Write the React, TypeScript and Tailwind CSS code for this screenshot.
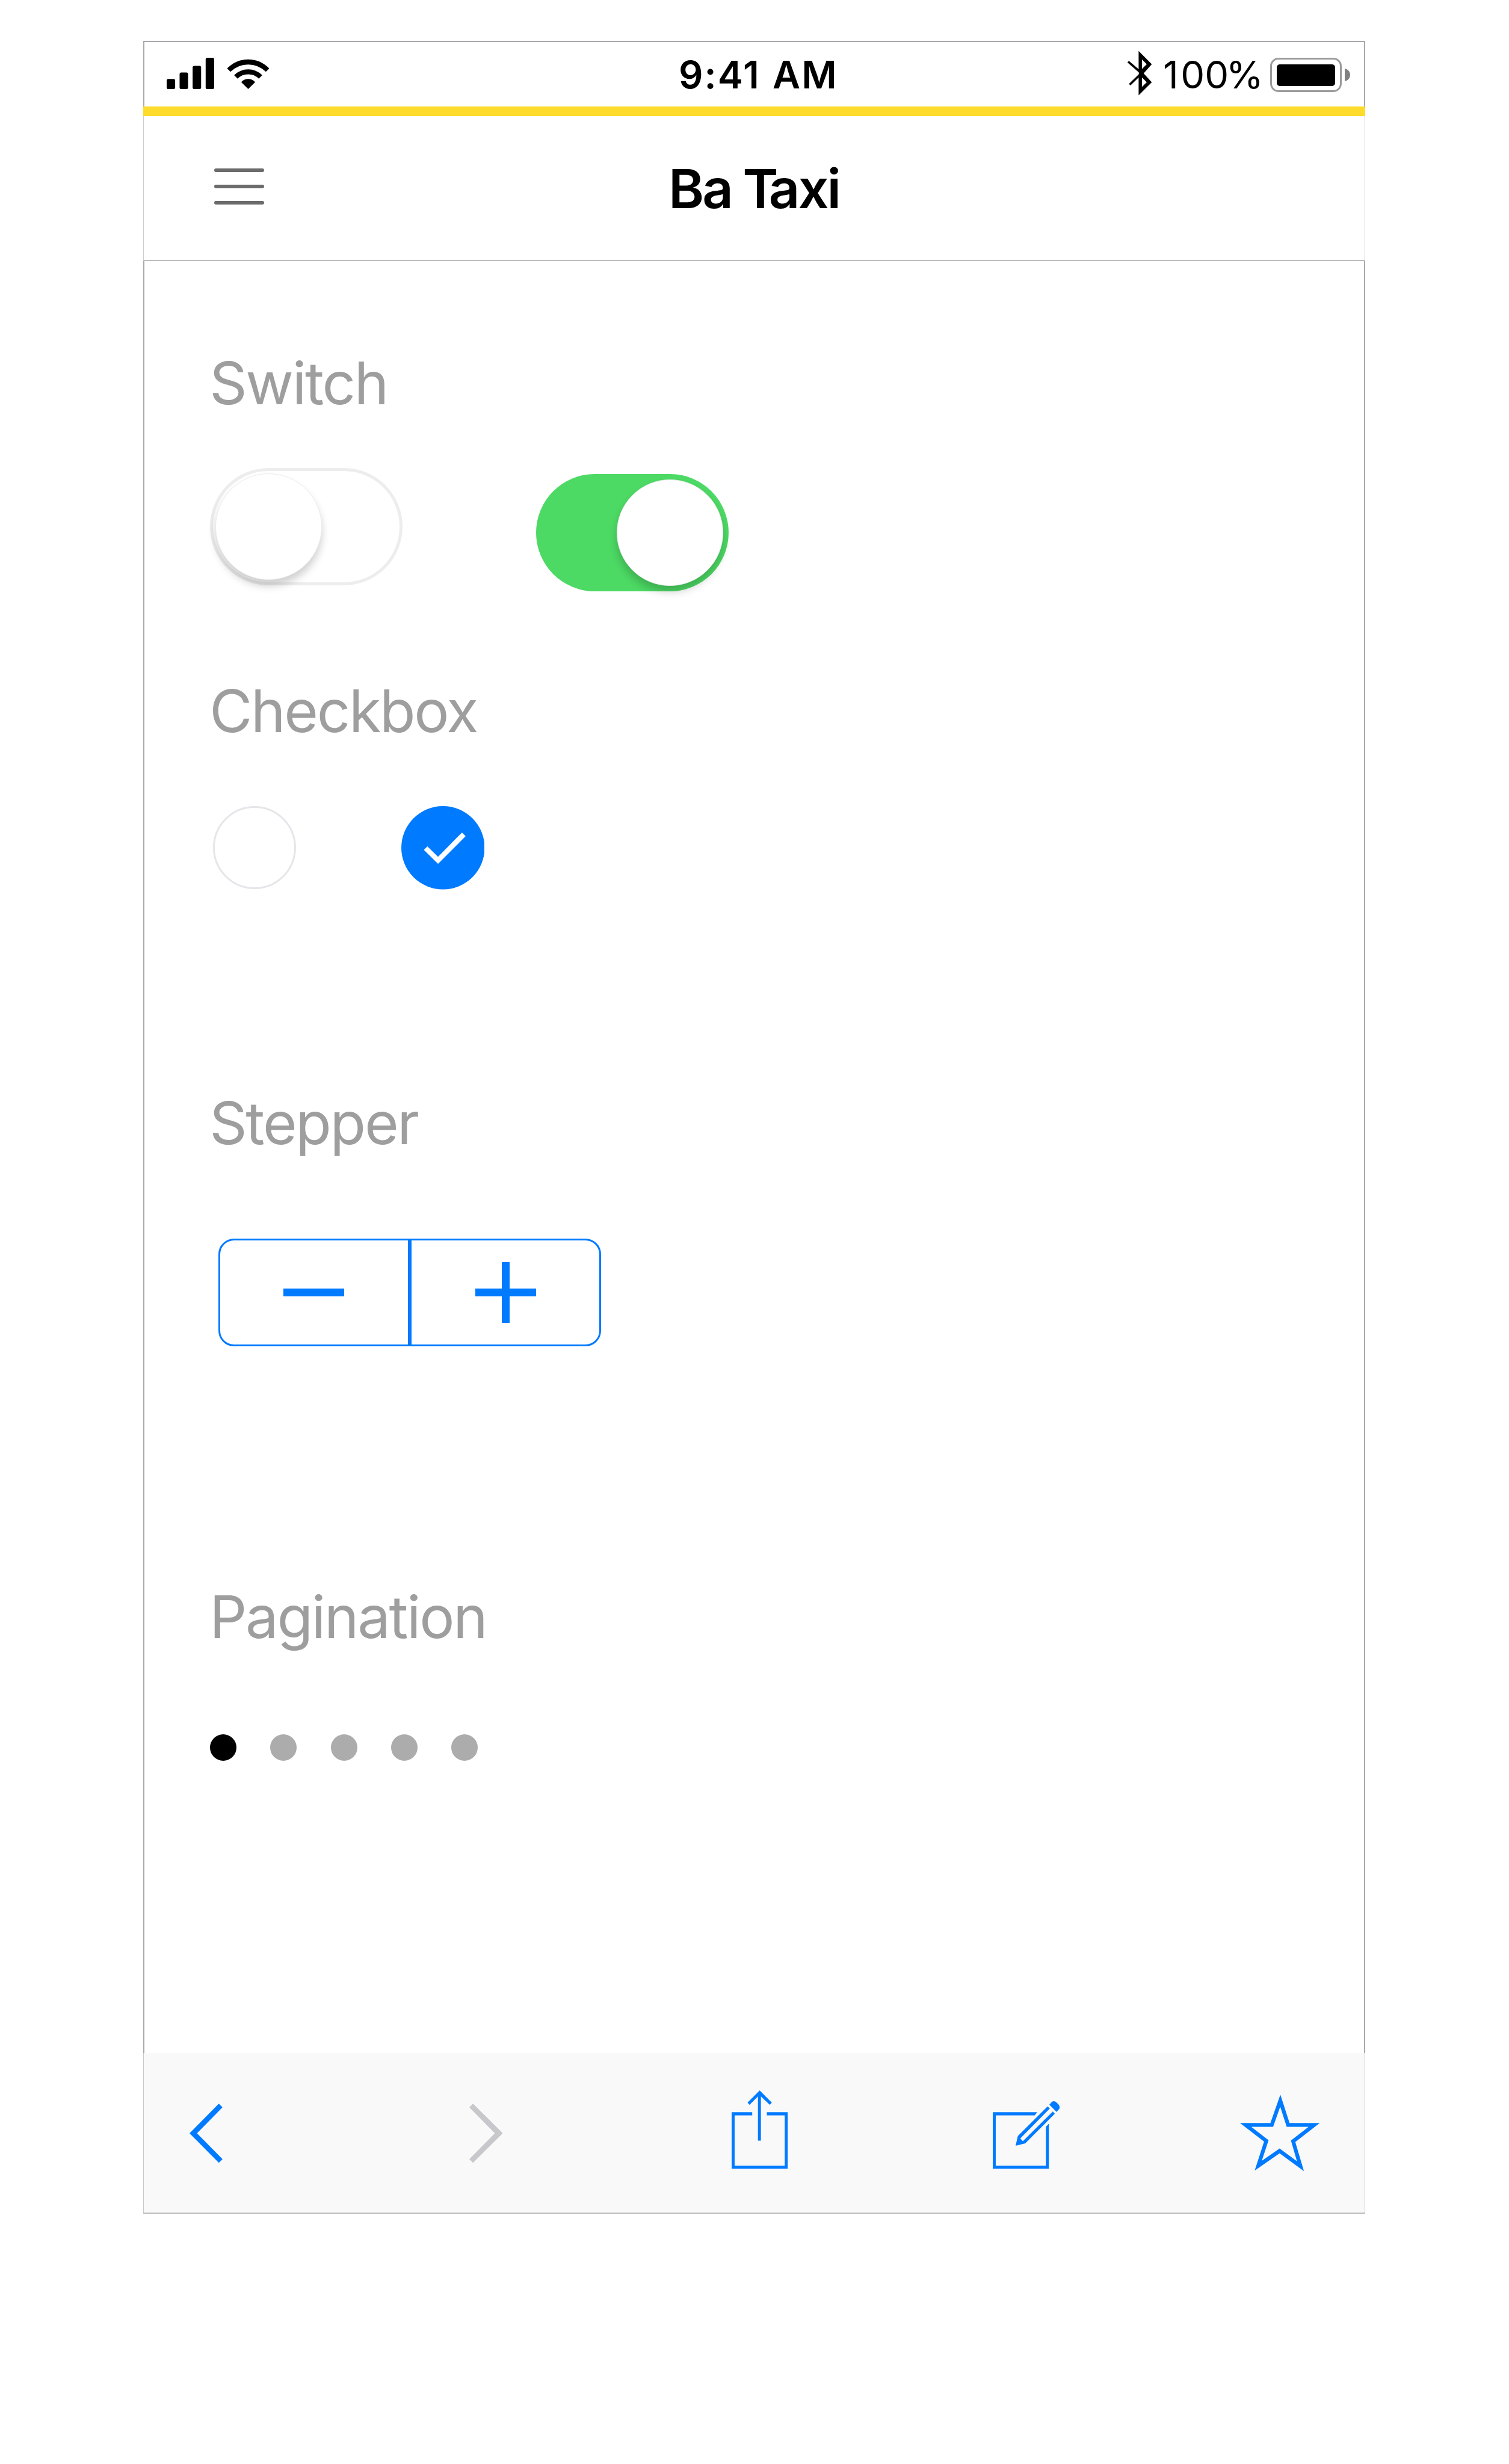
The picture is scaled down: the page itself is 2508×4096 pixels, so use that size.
const BLUE = '#007aff';

function SignalIcons() {
  return (
    <svg className="mt-[26px] ml-[36.7px] h-[52.4px] w-[170.6px] shrink-0" viewBox="152 170 508 206" preserveAspectRatio="none">
      <rect x="152" y="309" width="42" height="66" rx="8" ry="10" />
      <rect x="216" y="266" width="42" height="109" rx="8" ry="10" />
      <rect x="280.500" y="223" width="42" height="152" rx="8" ry="10" />
      <rect x="345" y="170" width="42" height="205" rx="8" ry="10" />
      <path d="M451 240Q496 181 555.500 181Q615 181 660 240L643 261Q605 214 555.500 214Q506 214 468 261Z" />
      <path d="M486 284Q516 246 555.500 246Q595 246 625 284L608 307Q587 278 555.500 278Q524 278 503 307Z" />
      <path d="M521 329Q536 309 555.500 309Q575 309 590 329L555.500 374Z" />
    </svg>
  );
}

function BluetoothIcon() {
  return (
    <svg className="mt-[13.3px] h-[76.3px] w-[44.6px] shrink-0" viewBox="100 120 155 300" preserveAspectRatio="none">
      <path
        fillRule="evenodd"
        d="M171 127L247 213L200 273L247 331L171 417V300L124 352L115 342L171 280L173 272L171 265L106 202L115 192L171 246ZM190 182V245L218 213ZM190 300V362L218 331Z"
      />
    </svg>
  );
}

function Battery() {
  return (
    <div className="mt-[26px] flex items-center">
      <div className="h-[57px] w-[119px] rounded-[14px] border-[3px] border-[#9b9b9b] px-[8px] pt-[7.500px]">
        <div className="h-[36px] w-[97px] rounded-[5px] bg-black" />
      </div>
      <svg className="ml-[5px] h-[21px] w-[9px]" viewBox="0 0 9 21">
        <path d="M0 0C5 1 9 5 9 10.500S5 20 0 21Z" fill="#808080" />
      </svg>
    </div>
  );
}

function StatusBar() {
  return (
    <div className="flex h-[109px] items-start border-x-2 border-t-2 border-[#a8a9ad]">
      <SignalIcons />
      <div className="mt-[23px] ml-[680.700px] w-[280px] text-[63.300px] leading-none font-semibold tracking-[2.100px] whitespace-nowrap [word-spacing:2px]">
        9:41 AM
      </div>
      <div className="ml-[463.700px]">
        <BluetoothIcon />
      </div>
      <div className="mt-[23px] ml-[16.700px] w-[178.500px] text-[63.300px] leading-none whitespace-nowrap">
        <span className="tracking-[3.600px]">1</span>0<span className="tracking-[-4.500px]">0</span>%
      </div>
      <Battery />
    </div>
  );
}

function NavBar() {
  return (
    <div className="flex h-[241px] items-start border-x border-b-2 border-x-[#cdcdcd] border-b-[#bdbdbd]">
      <div className="mt-[87px] ml-[117px] flex w-[83px] flex-col gap-[21px]">
        <div className="h-[6px] rounded-full bg-[#6b6b6b]" />
        <div className="h-[6px] rounded-full bg-[#6b6b6b]" />
        <div className="h-[6px] rounded-full bg-[#6b6b6b]" />
      </div>
      <h1 className="mt-[75.500px] ml-[672px] text-[89.900px] leading-none font-semibold tracking-[-2.900px] whitespace-nowrap [word-spacing:-1.500px]">
        Ba <span className="tracking-[-16px]">T</span>axi
      </h1>
    </div>
  );
}

function Heading({ children }: { children: string }) {
  return (
    <h2 className="-ml-[0.8px] h-[97px] text-[97.300px] leading-[97px] tracking-[-2.300px] whitespace-nowrap text-[#9e9e9e]">
      {children}
    </h2>
  );
}

function Knob() {
  return (
    <div className="size-[177px] rounded-full border border-[#ececec] bg-white shadow-[0_10px_14px_rgba(0,0,0,0.19)]" />
  );
}

function Switches() {
  return (
    <div className="mt-[93px] flex h-[205px] items-start">
      <div className="flex h-[195px] w-[320px] items-center rounded-full border-[5px] border-[#ededed] pl-[4px]">
        <Knob />
      </div>
      <div className="mt-[10px] ml-[222px] flex h-[195px] w-[320px] items-center justify-end rounded-full bg-[#4cd964] pr-[9px]">
        <Knob />
      </div>
    </div>
  );
}

function Checkboxes() {
  return (
    <div className="mt-[110px] ml-[4.500px] flex gap-[175px]">
      <div className="size-[138px] rounded-full border-[3px] border-[#e5e5ea]" />
      <svg className="size-[138.500px]" viewBox="886.7 1780.900 184 184">
        <circle cx="978.7" cy="1872.900" r="92" fill={BLUE} />
        <path d="M936.5 1877.7L944.3 1870L967.8 1892.700L1020.7 1839.300L1028.700 1847.300L967.8 1908.300Z" fill="#fff" />
      </svg>
    </div>
  );
}

function Stepper() {
  return (
    <div className="mt-[144.500px] ml-[14px] flex h-[179px] w-[636px] rounded-[26px] border-[3px] border-[#007aff]">
      <div className="flex flex-1 items-center justify-center">
        <div className="h-[13px] w-[101px] bg-[#007aff]" />
      </div>
      <div className="w-[6.500px] bg-[#007aff]" />
      <div className="flex flex-1 items-center justify-center">
        <svg className="size-[101px]" viewBox="0 0 101 101">
          <path d="M44 0H57V44H101V57H57V101H44V57H0V44H44Z" fill={BLUE} />
        </svg>
      </div>
    </div>
  );
}

function Dots() {
  return (
    <div className="mt-[147px] flex gap-[56.300px]">
      <div className="size-[44px] rounded-full bg-black" />
      <div className="size-[44px] rounded-full bg-[#acacac]" />
      <div className="size-[44px] rounded-full bg-[#acacac]" />
      <div className="size-[44px] rounded-full bg-[#acacac]" />
      <div className="size-[44px] rounded-full bg-[#acacac]" />
    </div>
  );
}

function ToolBar() {
  return (
    <div className="flex h-[267px] items-start border-x border-b-2 border-x-[#c9c9c9] border-b-[#bdbdbd] bg-[#f9f9f9]">
      <svg className="mt-[83.500px] ml-[76.200px] h-[98.300px] w-[54.900px]" viewBox="217 447 133 392" preserveAspectRatio="none">
        <path d="M335 447L350 471L247 643L350 815L335 839L217 643Z" fill={BLUE} />
      </svg>
      <svg className="mt-[83.500px] ml-[409.600px] h-[98.300px] w-[55.700px]" viewBox="1343 447 135 392" preserveAspectRatio="none">
        <path d="M1358 447L1343 471L1446 643L1343 815L1358 839L1478 643Z" fill="#c7c7cc" />
      </svg>
      <svg className="mt-[62.300px] ml-[381px] h-[130.100px] w-[93.200px]" viewBox="104 362 226 519" preserveAspectRatio="none">
        <path d="M104 507H187V528H116V861H318V528H246V507H330V881H104Z" fill={BLUE} />
        <path d="M217 362L266 443L258 458L222 402V695H210V402L176 458L168 443Z" fill={BLUE} />
      </svg>
      <svg className="mt-[80.300px] ml-[340px] h-[112.100px] w-[111.400px]" viewBox="1154 434 270 447" preserveAspectRatio="none">
        <path d="M1154 507H1333L1323 528H1166V861H1368V603L1380 583V881H1154Z" fill={BLUE} />
        <path d="M1375 468L1384 482L1265 680L1275 699L1396 502L1404 517L1285 713L1246 729L1255 664Z" fill={BLUE} />
        <path d="M1382 457L1391 440Q1399 430 1408 438Q1421 454 1424 472Q1424 480 1421 486L1411 505Z" fill={BLUE} />
      </svg>
      <svg className="mt-[69.300px] ml-[300px] h-[127.200px] w-[132.500px]" viewBox="270 390 528 507" preserveAspectRatio="none">
        <path
          fillRule="evenodd"
          d="M537 390L598 578H798L636 704L693 897L532 779L367 893L429 701L270 578H471ZM536 470L489 603H344L459 692L414 828L532 747L647 831L607 694L724 603H579Z"
          fill={BLUE}
        />
      </svg>
    </div>
  );
}

export default function App() {
  return (
    <div className="h-[4096px] w-[2508px] overflow-hidden bg-white pt-[68px] pl-[238px] font-['Inter',sans-serif] text-black">
      <div className="w-[2031px]">
        <StatusBar />
        <div className="h-[16px] bg-[#ffdb2b]" />
        <NavBar />
        <main className="h-[2979px] border-x-2 border-[#a8a9ad] pt-[154px] pl-[109px]">
          <Heading>Switch</Heading>
          <Switches />
          <div className="h-[150px]" />
          <Heading>Checkbox</Heading>
          <Checkboxes />
          <div className="h-[339px]" />
          <Heading>Stepper</Heading>
          <Stepper />
          <div className="h-[401px]" />
          <Heading>Pagination</Heading>
          <Dots />
        </main>
        <ToolBar />
      </div>
    </div>
  );
}
